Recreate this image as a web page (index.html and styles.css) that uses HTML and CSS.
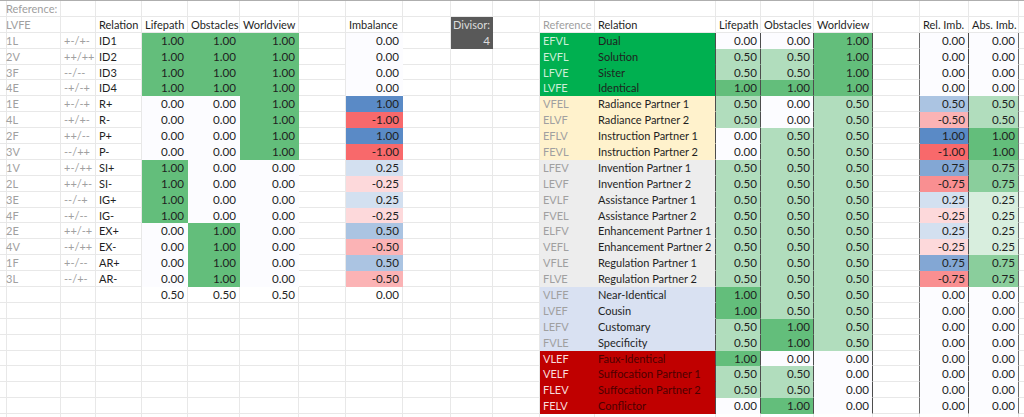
FILE: index.html
```html
<!DOCTYPE html>
<html lang="en">
<head>
<meta charset="utf-8">
<title>Relations</title>
<link rel="stylesheet" href="styles.css">
</head>
<body>
<div class="sheet">
<div class="row"><i></i><span class="m">Reference:</span><i></i><i></i><i></i><i></i><i></i><i></i><i></i><i></i><i></i><i></i><i></i><i></i><i></i><i></i><i></i><i></i><i></i><i></i><i></i></div>
<div class="row"><i></i><span class="m">LVFE</span><i></i><span>Relation</span><span>Lifepath</span><span>Obstacles</span><span>Worldview</span><i></i><span>Imbalance</span><i></i><span class="dv">Divisor:</span><i></i><span class="m">Reference</span><span>Relation</span><span>Lifepath</span><span>Obstacles</span><span>Worldview</span><i></i><span>Rel. Imb.</span><span>Abs. Imb.</span><i></i></div>

<div class="row"><i></i><span class="m">1L</span><span class="m">+-/+-</span><span>ID1</span><span class="n g4">1.00</span><span class="n g4">1.00</span><span class="n g4">1.00</span><i></i><span class="n z">0.00</span><i></i><span class="n dv">4</span><i></i><span class="rg">EFVL</span><span class="fg bar">Dual</span><span class="n z bar">0.00</span><span class="n z bar">0.00</span><span class="n g4 bar">1.00</span><i class="bar2"></i><span class="n z bar">0.00</span><span class="n z bar2">0.00</span><i></i></div>
<div class="row"><i></i><span class="m">2V</span><span class="m">++/++</span><span>ID2</span><span class="n g4">1.00</span><span class="n g4">1.00</span><span class="n g4">1.00</span><i></i><span class="n z">0.00</span><i></i><i></i><i></i><span class="rg">EVFL</span><span class="fg bar">Solution</span><span class="n g2 bar">0.50</span><span class="n g2 bar">0.50</span><span class="n g4 bar">1.00</span><i class="bar2"></i><span class="n z bar">0.00</span><span class="n z bar2">0.00</span><i></i></div>
<div class="row"><i></i><span class="m">3F</span><span class="m">--/--</span><span>ID3</span><span class="n g4">1.00</span><span class="n g4">1.00</span><span class="n g4">1.00</span><i></i><span class="n z">0.00</span><i></i><i></i><i></i><span class="rg">LFVE</span><span class="fg bar">Sister</span><span class="n g2 bar">0.50</span><span class="n g2 bar">0.50</span><span class="n g4 bar">1.00</span><i class="bar2"></i><span class="n z bar">0.00</span><span class="n z bar2">0.00</span><i></i></div>
<div class="row"><i></i><span class="m">4E</span><span class="m">-+/-+</span><span>ID4</span><span class="n g4">1.00</span><span class="n g4">1.00</span><span class="n g4">1.00</span><i></i><span class="n z">0.00</span><i></i><i></i><i></i><span class="rg">LVFE</span><span class="fg bar">Identical</span><span class="n g4 bar">1.00</span><span class="n g4 bar">1.00</span><span class="n g4 bar">1.00</span><i class="bar2"></i><span class="n z bar">0.00</span><span class="n z bar2">0.00</span><i></i></div>

<div class="row"><i></i><span class="m">1E</span><span class="m">+-/-+</span><span>R+</span><span class="n z">0.00</span><span class="n z">0.00</span><span class="n g4">1.00</span><i></i><span class="n b4">1.00</span><i></i><i></i><i></i><span class="rc">VFEL</span><span class="fc bar">Radiance Partner 1</span><span class="n g2 bar">0.50</span><span class="n z bar">0.00</span><span class="n g2 bar">0.50</span><i class="bar2"></i><span class="n b2 bar">0.50</span><span class="n g2 bar2">0.50</span><i></i></div>
<div class="row"><i></i><span class="m">4L</span><span class="m">-+/+-</span><span>R-</span><span class="n z">0.00</span><span class="n z">0.00</span><span class="n g4">1.00</span><i></i><span class="n r4">-1.00</span><i></i><i></i><i></i><span class="rc">ELVF</span><span class="fc bar">Radiance Partner 2</span><span class="n g2 bar">0.50</span><span class="n z bar">0.00</span><span class="n g2 bar">0.50</span><i class="bar2"></i><span class="n r2 bar">-0.50</span><span class="n g2 bar2">0.50</span><i></i></div>
<div class="row"><i></i><span class="m">2F</span><span class="m">++/--</span><span>P+</span><span class="n z">0.00</span><span class="n z">0.00</span><span class="n g4">1.00</span><i></i><span class="n b4">1.00</span><i></i><i></i><i></i><span class="rc">EFLV</span><span class="fc bar">Instruction Partner 1</span><span class="n z bar">0.00</span><span class="n g2 bar">0.50</span><span class="n g2 bar">0.50</span><i class="bar2"></i><span class="n b4 bar">1.00</span><span class="n g4 bar2">1.00</span><i></i></div>
<div class="row"><i></i><span class="m">3V</span><span class="m">--/++</span><span>P-</span><span class="n z">0.00</span><span class="n z">0.00</span><span class="n g4">1.00</span><i></i><span class="n r4">-1.00</span><i></i><i></i><i></i><span class="rc">FEVL</span><span class="fc bar">Instruction Partner 2</span><span class="n z bar">0.00</span><span class="n g2 bar">0.50</span><span class="n g2 bar">0.50</span><i class="bar2"></i><span class="n r4 bar">-1.00</span><span class="n g4 bar2">1.00</span><i></i></div>

<div class="row"><i></i><span class="m">1V</span><span class="m">+-/++</span><span>SI+</span><span class="n g4">1.00</span><span class="n z">0.00</span><span class="n z">0.00</span><i></i><span class="n b1">0.25</span><i></i><i></i><i></i><span class="re">LFEV</span><span class="fe bar">Invention Partner 1</span><span class="n g2 bar">0.50</span><span class="n g2 bar">0.50</span><span class="n g2 bar">0.50</span><i class="bar2"></i><span class="n b3 bar">0.75</span><span class="n g3 bar2">0.75</span><i></i></div>
<div class="row"><i></i><span class="m">2L</span><span class="m">++/+-</span><span>SI-</span><span class="n g4">1.00</span><span class="n z">0.00</span><span class="n z">0.00</span><i></i><span class="n r1">-0.25</span><i></i><i></i><i></i><span class="re">LEVF</span><span class="fe bar">Invention Partner 2</span><span class="n g2 bar">0.50</span><span class="n g2 bar">0.50</span><span class="n g2 bar">0.50</span><i class="bar2"></i><span class="n r3 bar">-0.75</span><span class="n g3 bar2">0.75</span><i></i></div>
<div class="row"><i></i><span class="m">3E</span><span class="m">--/-+</span><span>IG+</span><span class="n g4">1.00</span><span class="n z">0.00</span><span class="n z">0.00</span><i></i><span class="n b1">0.25</span><i></i><i></i><i></i><span class="re">EVLF</span><span class="fe bar">Assistance Partner 1</span><span class="n g2 bar">0.50</span><span class="n g2 bar">0.50</span><span class="n g2 bar">0.50</span><i class="bar2"></i><span class="n b1 bar">0.25</span><span class="n g1 bar2">0.25</span><i></i></div>
<div class="row"><i></i><span class="m">4F</span><span class="m">-+/--</span><span>IG-</span><span class="n g4">1.00</span><span class="n z">0.00</span><span class="n z">0.00</span><i></i><span class="n r1">-0.25</span><i></i><i></i><i></i><span class="re">FVEL</span><span class="fe bar">Assistance Partner 2</span><span class="n g2 bar">0.50</span><span class="n g2 bar">0.50</span><span class="n g2 bar">0.50</span><i class="bar2"></i><span class="n r1 bar">-0.25</span><span class="n g1 bar2">0.25</span><i></i></div>

<div class="row"><i></i><span class="m">2E</span><span class="m">++/-+</span><span>EX+</span><span class="n z">0.00</span><span class="n g4">1.00</span><span class="n z">0.00</span><i></i><span class="n b2">0.50</span><i></i><i></i><i></i><span class="re">ELFV</span><span class="fe bar">Enhancement Partner 1</span><span class="n g2 bar">0.50</span><span class="n g2 bar">0.50</span><span class="n g2 bar">0.50</span><i class="bar2"></i><span class="n b1 bar">0.25</span><span class="n g1 bar2">0.25</span><i></i></div>
<div class="row"><i></i><span class="m">4V</span><span class="m">-+/++</span><span>EX-</span><span class="n z">0.00</span><span class="n g4">1.00</span><span class="n z">0.00</span><i></i><span class="n r2">-0.50</span><i></i><i></i><i></i><span class="re">VEFL</span><span class="fe bar">Enhancement Partner 2</span><span class="n g2 bar">0.50</span><span class="n g2 bar">0.50</span><span class="n g2 bar">0.50</span><i class="bar2"></i><span class="n r1 bar">-0.25</span><span class="n g1 bar2">0.25</span><i></i></div>
<div class="row"><i></i><span class="m">1F</span><span class="m">+-/--</span><span>AR+</span><span class="n z">0.00</span><span class="n g4">1.00</span><span class="n z">0.00</span><i></i><span class="n b2">0.50</span><i></i><i></i><i></i><span class="re">VFLE</span><span class="fe bar">Regulation Partner 1</span><span class="n g2 bar">0.50</span><span class="n g2 bar">0.50</span><span class="n g2 bar">0.50</span><i class="bar2"></i><span class="n b3 bar">0.75</span><span class="n g3 bar2">0.75</span><i></i></div>
<div class="row"><i></i><span class="m">3L</span><span class="m">--/+-</span><span>AR-</span><span class="n z">0.00</span><span class="n g4">1.00</span><span class="n z">0.00</span><i></i><span class="n r2">-0.50</span><i></i><i></i><i></i><span class="re">FLVE</span><span class="fe bar">Regulation Partner 2</span><span class="n g2 bar">0.50</span><span class="n g2 bar">0.50</span><span class="n g2 bar">0.50</span><i class="bar2"></i><span class="n r3 bar">-0.75</span><span class="n g3 bar2">0.75</span><i></i></div>

<div class="row"><i></i><i></i><i></i><i></i><span class="n">0.50</span><span class="n">0.50</span><span class="n">0.50</span><i></i><span class="n">0.00</span><i></i><i></i><i></i><span class="rb">VLFE</span><span class="fb bar">Near-Identical</span><span class="n g4 bar">1.00</span><span class="n g2 bar">0.50</span><span class="n g2 bar">0.50</span><i class="bar2"></i><span class="n z bar">0.00</span><span class="n z bar2">0.00</span><i></i></div>
<div class="row"><i></i><i></i><i></i><i></i><i></i><i></i><i></i><i></i><i></i><i></i><i></i><i></i><span class="rb">LVEF</span><span class="fb bar">Cousin</span><span class="n g4 bar">1.00</span><span class="n g2 bar">0.50</span><span class="n g2 bar">0.50</span><i class="bar2"></i><span class="n z bar">0.00</span><span class="n z bar2">0.00</span><i></i></div>
<div class="row"><i></i><i></i><i></i><i></i><i></i><i></i><i></i><i></i><i></i><i></i><i></i><i></i><span class="rb">LEFV</span><span class="fb bar">Customary</span><span class="n g2 bar">0.50</span><span class="n g4 bar">1.00</span><span class="n g2 bar">0.50</span><i class="bar2"></i><span class="n z bar">0.00</span><span class="n z bar2">0.00</span><i></i></div>
<div class="row"><i></i><i></i><i></i><i></i><i></i><i></i><i></i><i></i><i></i><i></i><i></i><i></i><span class="rb">FVLE</span><span class="fb bar">Specificity</span><span class="n g2 bar">0.50</span><span class="n g4 bar">1.00</span><span class="n g2 bar">0.50</span><i class="bar2"></i><span class="n z bar">0.00</span><span class="n z bar2">0.00</span><i></i></div>

<div class="row"><i></i><i></i><i></i><i></i><i></i><i></i><i></i><i></i><i></i><i></i><i></i><i></i><span class="rr">VLEF</span><span class="fr bar">Faux-Identical</span><span class="n g4 bar">1.00</span><span class="n z bar">0.00</span><span class="n z bar">0.00</span><i class="bar2"></i><span class="n z bar">0.00</span><span class="n z bar2">0.00</span><i></i></div>
<div class="row"><i></i><i></i><i></i><i></i><i></i><i></i><i></i><i></i><i></i><i></i><i></i><i></i><span class="rr">VELF</span><span class="fr bar">Suffocation Partner 1</span><span class="n g2 bar">0.50</span><span class="n g2 bar">0.50</span><span class="n z bar">0.00</span><i class="bar2"></i><span class="n z bar">0.00</span><span class="n z bar2">0.00</span><i></i></div>
<div class="row"><i></i><i></i><i></i><i></i><i></i><i></i><i></i><i></i><i></i><i></i><i></i><i></i><span class="rr">FLEV</span><span class="fr bar">Suffocation Partner 2</span><span class="n g2 bar">0.50</span><span class="n g2 bar">0.50</span><span class="n z bar">0.00</span><i class="bar2"></i><span class="n z bar">0.00</span><span class="n z bar2">0.00</span><i></i></div>
<div class="row"><i></i><i></i><i></i><i></i><i></i><i></i><i></i><i></i><i></i><i></i><i></i><i></i><span class="rr">FELV</span><span class="fr bar">Conflictor</span><span class="n z bar">0.00</span><span class="n g4 bar">1.00</span><span class="n z bar">0.00</span><i class="bar2"></i><span class="n z bar">0.00</span><span class="n z bar2">0.00</span><i></i></div>
<div class="row"><i></i><i></i><i></i><i></i><i></i><i></i><i></i><i></i><i></i><i></i><i></i><i></i><i></i><i></i><i></i><i></i><i></i><i></i><i></i><i></i><i></i></div>
</div>
</body>
</html>
```
FILE: styles.css
```css
html, body {
  margin: 0;
  padding: 0;
  background: #fff;
  overflow: hidden;
}

.sheet {
  width: 1024px;
  height: 417px;
  overflow: hidden;
  border-top: 1px solid #aeaeae;
  box-sizing: border-box;
  font-family: "Lato", "Liberation Sans", sans-serif;
  font-size: 11px;
  color: #1f1f1f;
}

.row {
  display: grid;
  grid-template-columns: 3px 58px 35px 46px 46px 52px 59px 47px 57px 48px 42px 47px 55px 121px 45px 53px 59px 47px 49px 50px 5px;
  height: 15.9px;
}

.row > * {
  display: block;
  box-sizing: border-box;
  min-width: 0;
  height: 100%;
  padding: 0 3px;
  font-style: normal;
  line-height: 15px;
  white-space: nowrap;
  overflow: hidden;
  border-right: 1px solid #e8e8e8;
  border-bottom: 1px solid #e8e8e8;
}

.row > .n {
  text-align: right;
  font-size: 11.6px;
}

.row > .m { color: #a0a0a0; }

/* Colour-scale fills hide the gridlines */
.z, .g1, .g2, .g3, .g4, .b1, .b2, .b3, .b4, .r1, .r2, .r3, .r4,
.rg, .fg, .rc, .fc, .re, .fe, .rb, .fb, .rr, .fr, .dv {
  border-color: transparent !important;
}

.z  { background: #fcfcff; }
.g1 { background: #d8eede; }
.g2 { background: #b1ddbd; }
.g3 { background: #8ace9c; }
.g4 { background: #63be7b; }
.b1 { background: #d3e0f0; }
.b2 { background: #abc4e2; }
.b3 { background: #83a7d4; }
.b4 { background: #5a8ac6; }
.r1 { background: #fdd9db; }
.r2 { background: #fbb3b5; }
.r3 { background: #f98f91; }
.r4 { background: #f8696b; }

.row > .dv {
  background: #595959;
  color: #dcdcdc;
  padding: 0 2px;
}

.rg, .fg { background: #00b050; }
.rc, .fc { background: #fff2cc; }
.re, .fe { background: #ededed; }
.rb, .fb { background: #d9e1f2; }
.rr, .fr { background: #c00000; }

.row > .rg { color: #cdeed8; }
.row > .rc, .row > .re, .row > .rb { color: #a0a0a0; }
.row > .rr { color: #f7dcdc; }
.row > .fr { color: #4d0000; }

.row > .bar { border-right: 1px solid #4d4d4d !important; }
.row > .bar2 { border-right: 1px solid #6e6e6e !important; }
```
